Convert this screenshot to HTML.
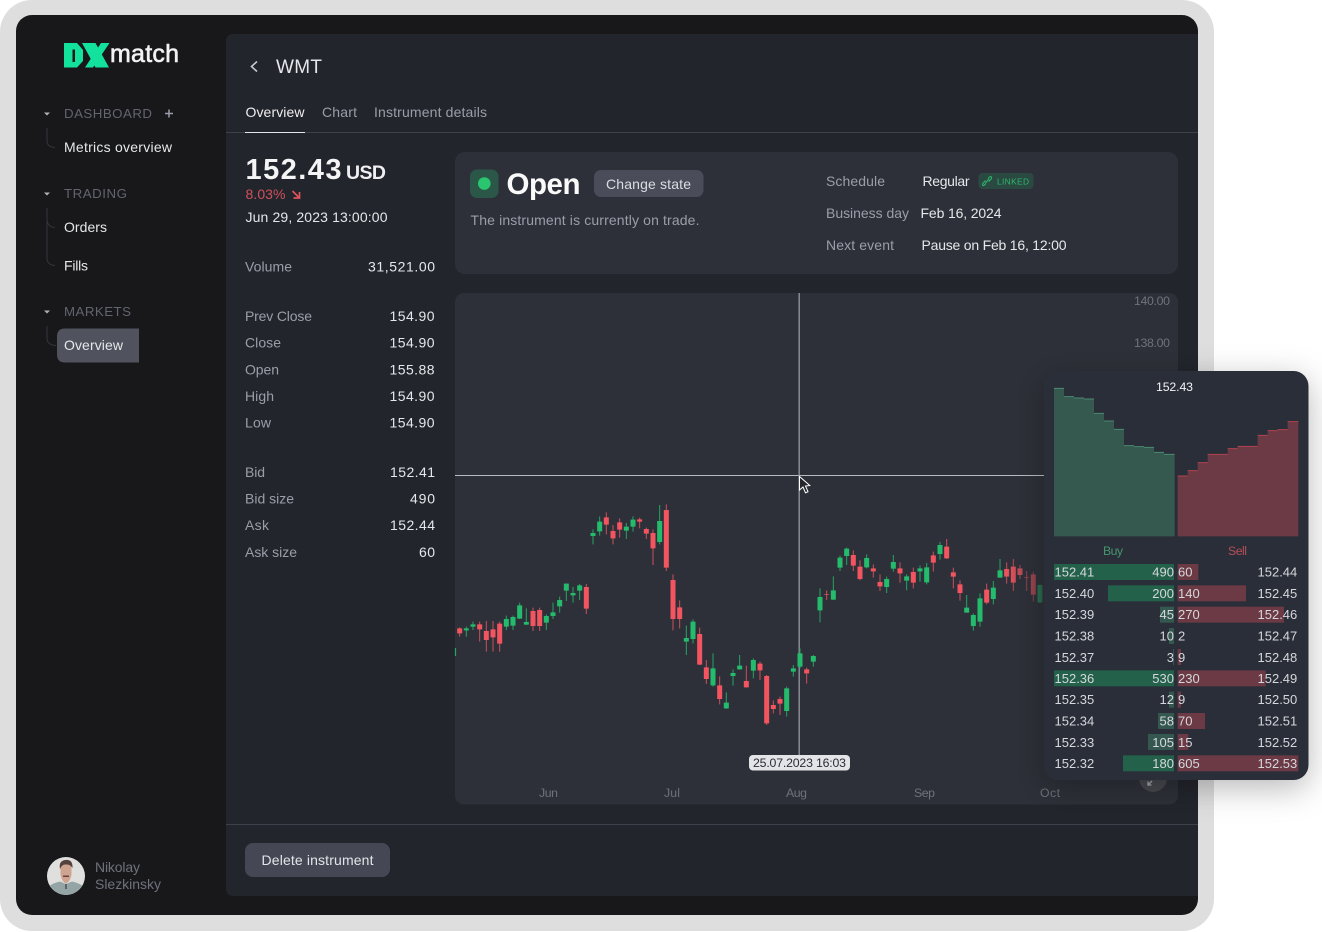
<!DOCTYPE html>
<html lang="en"><head><meta charset="utf-8"><title>DXmatch WMT</title>
<style>
html,body{margin:0;padding:0;background:#fff;width:1322px;height:932px;overflow:hidden}
svg{display:block}
text{font-family:"Liberation Sans",Arial,sans-serif;font-size:14px;white-space:pre}
.w{fill:#e6e7ea}.g{fill:#9b9da9}.d{fill:#62646f;font-size:13.300px}.b{fill:#6f717d}
.s{font-size:12.300px}
.o{font-size:13px;fill:#d6d7dc}
</style></head><body>
<svg width="1322" height="932" viewBox="0 0 1322 932" xmlns="http://www.w3.org/2000/svg">
<defs>
<filter id="sh" x="-30%" y="-20%" width="160%" height="140%"><feDropShadow dx="0" dy="8" stdDeviation="16" flood-color="#000" flood-opacity=".28"/></filter>
<linearGradient id="fade" x1="0" x2="1" y1="0" y2="0"><stop offset="0" stop-color="#2e3039" stop-opacity="0"/><stop offset=".4" stop-color="#2e3039" stop-opacity=".3"/><stop offset="1" stop-color="#2e3039" stop-opacity=".7"/></linearGradient>
<clipPath id="av"><circle cx="66" cy="876" r="19"/></clipPath>
</defs>
<rect width="1322" height="932" fill="#fff"/>
<rect x="0" y="0" width="1214" height="931" rx="32" fill="#dedede"/>
<rect x="16" y="15" width="1182" height="900" rx="16" fill="#18181b"/>

<!-- logo -->
<path fill="#12e29b" d="M64 43H77L83 50V61L77 67.500H64Z"/>
<path fill="#18181b" d="M72.500 49.500H75V62H72.500Z"/>
<path fill="#18181b" d="M79 43H83L101 67.500H97Z"/>
<path fill="#12e29b" d="M82 43H95.500L109 67.500H95.500Z"/>
<path fill="#12e29b" d="M101 43H109.500L93 67.500H85Z"/>
<text x="110" y="62" style="font-size:25px" fill="#f2f2f3" stroke="#f2f2f3" stroke-width=".6" textLength="69">match</text>

<!-- sidebar -->
<path fill="#aeb0b8" d="M44 112.500H50L47 115.500ZM44 192.500H50L47 195.500ZM44 310.500H50L47 313.500Z"/>
<path fill="none" stroke="#33353c" d="M47 128V141Q47 147 55 147.500M47 208V258Q47 265 55 265.500M47 219Q47 227 55 227.500M47 326V338Q47 345 56 345.500"/>
<text class="d" x="64" y="118" textLength="88">DASHBOARD</text>
<path stroke="#9a9ca6" stroke-width="1.500" d="M165 113.500H173M169 109.500V117.500"/>
<text class="w" x="64" y="152" textLength="108">Metrics overview</text>
<text class="d" x="64" y="198" textLength="63">TRADING</text>
<text class="w" x="64" y="232" textLength="43">Orders</text>
<text class="w" x="64" y="270.500" textLength="24">Fills</text>
<text class="d" x="64" y="316" textLength="67">MARKETS</text>
<path fill="#50525e" d="M65 328.500H139V362.500H65Q57 362.500 57 354.500V336.500Q57 328.500 65 328.500Z"/>
<text class="w" x="64" y="350" textLength="59">Overview</text>

<!-- avatar -->
<g clip-path="url(#av)">
<rect x="47" y="857" width="38" height="38" fill="#dfdfdd"/>
<path fill="#95a5a5" d="M47 895V888Q52 883 60 881.500L66 884L72 881.500Q80 883 85 888V895Z"/>
<path fill="#cfa491" d="M60.500 866Q66 862 71.500 866L71.500 875Q70 882 66 883.500Q62 882 60.500 875Z"/>
<path fill="#55423d" d="M60 869Q58.500 861 65 860Q73 859 72.500 868Q70 864 66 864.500Q62 864 60 869Z"/>
<path fill="#6a423a" d="M63 875.500H69V877H63Z"/>
<path fill="#4a5659" d="M65.200 884H66.800V889H65.200Z"/>
</g>
<text class="b" x="95" y="872" textLength="45">Nikolay</text>
<text class="b" x="95" y="889" textLength="66">Slezkinsky</text>

<!-- main panel -->
<path fill="#23252d" d="M234 34H1198V896H234Q226 896 226 888V42Q226 34 234 34Z"/>
<path fill="none" stroke="#c9cad0" stroke-width="1.600" d="M257 61.500L251.500 66.500L257 71.500"/>
<text x="276" y="73" style="font-size:19px" class="w" textLength="46">WMT</text>
<text x="245.500" y="117" fill="#eeeef0" textLength="59">Overview</text>
<text class="g" x="322" y="117" textLength="35">Chart</text>
<text class="g" x="374" y="117" textLength="113">Instrument details</text>
<path stroke="#3e404b" d="M226 132.500H1198"/>
<path stroke="#e6e7ea" d="M245 132.500H305"/>

<text x="245.500" y="179" style="font-size:29px;font-weight:700" fill="#f5f5f6" textLength="96">152.43</text>
<text x="346" y="179" style="font-size:19.500px;font-weight:700" fill="#f0f0f2" textLength="40">USD</text>
<text x="245.500" y="199" fill="#d1505a" textLength="40">8.03%</text>
<path fill="none" stroke="#e0535c" stroke-width="1.700" d="M292.500 191L299 197.500M299.500 192V198H293.500"/>
<text class="w" x="245.500" y="222" textLength="142">Jun 29, 2023 13:00:00</text>

<text class="g" x="245" y="271.500" textLength="47">Volume</text><text class="w" x="368" y="271.500" textLength="67">31,521.00</text>
<text class="g" x="245" y="321" textLength="67">Prev Close</text><text class="w" x="389.500" y="321" textLength="45">154.90</text>
<text class="g" x="245" y="347.500" textLength="36">Close</text><text class="w" x="389.500" y="347.500" textLength="45">154.90</text>
<text class="g" x="245" y="374.500" textLength="34">Open</text><text class="w" x="389.500" y="374.500" textLength="45">155.88</text>
<text class="g" x="245" y="401" textLength="29">High</text><text class="w" x="389.500" y="401" textLength="45">154.90</text>
<text class="g" x="245" y="427.500" textLength="26">Low</text><text class="w" x="389.500" y="427.500" textLength="45">154.90</text>
<text class="g" x="245" y="477" textLength="20">Bid</text><text class="w" x="390" y="477" textLength="45">152.41</text>
<text class="g" x="245" y="503.500" textLength="49">Bid size</text><text class="w" x="410" y="503.500" textLength="25">490</text>
<text class="g" x="245" y="530" textLength="24">Ask</text><text class="w" x="390" y="530" textLength="45">152.44</text>
<text class="g" x="245" y="557" textLength="52">Ask size</text><text class="w" x="419" y="557" textLength="16">60</text>

<!-- state card -->
<rect x="455" y="152" width="723" height="122" rx="10" fill="#2e3039"/>
<rect x="470" y="169.500" width="28.500" height="28.500" rx="7" fill="#2a5747"/>
<circle cx="484.300" cy="183.500" r="6.300" fill="#2cc56f"/>
<text x="506.500" y="194" style="font-size:29.500px;font-weight:700" fill="#fafafb" textLength="74">Open</text>
<rect x="594" y="170" width="109.500" height="27" rx="7" fill="#4a4c59"/>
<text x="606" y="189" fill="#dcdde2" textLength="85">Change state</text>
<text class="g" x="470.500" y="225" textLength="229">The instrument is currently on trade.</text>
<text class="g" x="826" y="186" textLength="59">Schedule</text>
<text class="w" x="922.500" y="186" textLength="47">Regular</text>
<rect x="978.500" y="173" width="55" height="16" rx="4" fill="#2a4a41"/>
<path fill="none" stroke="#2fb56d" stroke-width="1.100" d="M986 183.500L983.800 185.500Q982 185.800 982.800 183.500L985.500 180.500M988 178.500L990 176.700Q992 176.300 991.500 178.500L988.800 181.500M985.500 183L989 179"/>
<text x="997" y="184.500" style="font-size:8.400px" fill="#2fb56d" textLength="32">LINKED</text>
<text class="g" x="826" y="218" textLength="83">Business day</text>
<text class="w" x="920.500" y="218" textLength="81">Feb 16, 2024</text>
<text class="g" x="826" y="250" textLength="68">Next event</text>
<text class="w" x="921.500" y="250" textLength="145">Pause on Feb 16, 12:00</text>

<!-- chart -->
<rect x="455" y="293" width="723" height="511.500" rx="9" fill="#2e3039"/>
<text class="b s" x="1134" y="305" textLength="36">140.00</text>
<text class="b s" x="1134" y="347" textLength="36">138.00</text>

<path stroke="#babbc2" d="M455 475.500H1060"/>
<path stroke="#8f919b" stroke-width="1.400" d="M799.200 293V760"/>

<path stroke="#25a765" stroke-width="1.200" d="M455.500 648V656"/>
<g transform="translate(455 495) scale(.33333)" fill="none">
<path stroke="#c9505b" stroke-width="3" d="M14 397V425M74 380V440M94 378V470M114 378V470M134 380V470M234 338V408M254 338V408M394 267V357M454 52V118M474 90V148M494 70V128M554 68V100M574 98V132M594 103V210M634 28V228M654 238V406M674 316V400M734 398V510M754 495V567M794 544V628M874 512V578"/>
<path stroke="#f2555f" stroke-width="15" d="M14 400V415M74 388V403M94 408V435M114 403V427M134 386V446M234 348V393M254 345V393M394 276V341M454 67V89M474 108V130M494 82V104M554 73V80M574 102V116M594 114V160M634 45V218M654 255V372M674 337V372M734 417V509M754 517V552M794 571V612M874 558V577"/>
<path stroke="#24a462" stroke-width="3" d="M34 395V425M54 380V405M154 362V405M174 362V405M194 323V372M214 340V390M274 358V405M294 323V372M314 305V353M334 265V318M354 276V323M374 267V315M414 103V148M434 64V122M514 84V132M534 64V110M614 30V148M694 392V480M714 373V445M774 475V575M814 592V642M834 523V572M854 480V524"/>
<path stroke="#25bb6c" stroke-width="15" d="M34 400V406M54 388V395M154 372V395M174 366V392M194 331V371M214 381V389M274 363V383M294 352V363M314 315V334M334 266V287M354 294V301M374 271V287M414 114V123M434 80V109M514 95V107M534 74V95M614 78V141M694 429V440M714 380V432M774 520V571M814 623V640M834 534V543M854 512V523"/>
</g>
<g transform="translate(750 465) scale(.33333)" fill="none">
<path stroke="#c9505b" stroke-width="3" d="M30 590V645M50 630V780M70 706V745M90 695V750M170 608V656M230 376V405M310 256V318M330 286V346M370 298V338M390 328V378M450 292V353M490 308V370M550 260V320M590 222V282M610 308V370M630 346V407M710 356V418M770 292V356M790 282V378M810 300V342M830 318V378M850 320V410"/>
<path stroke="#f2555f" stroke-width="15" d="M30 596V616M50 633V775M70 720V732M90 702V716M170 613V625M230 388V390M310 270V302M330 305V342M370 310V319M390 351V364M450 310V325M490 321V353M550 271V293M590 245V280M610 322V335M630 358V384M710 374V413M770 312V335M790 305V353M810 310V330M830 336V338M850 328V389"/>
<path stroke="#24a462" stroke-width="3" d="M10 580V640M110 665V755M130 600V635M150 550V610M190 570V605M210 370V472M250 334V405M270 272V318M290 248V300M350 268V310M410 335V384M430 270V320M470 328V376M510 302V350M530 294V358M570 231V284M650 390V443M670 445V497M690 385V485M730 348V418M750 282V338M870 358V415"/>
<path stroke="#25bb6c" stroke-width="15" d="M10 585V617M110 670V738M130 610V620M150 565V605M190 573V590M210 396V436M250 376V404M270 278V308M290 251V273M350 279V307M410 342V366M430 291V311M470 334V347M510 310V319M530 307V352M570 240V267M650 428V443M670 450V483M690 400V470M730 368V402M750 316V338M870 360V412"/>
</g>
<rect x="1004" y="530" width="44" height="90" fill="url(#fade)"/>

<path fill="#25262d" stroke="#fff" stroke-width="1" d="M799.500 476.500V490L803 487L805.500 492.800L808 491.700L805.500 486L809.800 485.500Z"/>

<rect x="749" y="755" width="101" height="15.500" rx="4" fill="#e3e4e8"/>
<text x="753" y="766.800" style="font-size:12.300px" fill="#2a2b33" textLength="93">25.07.2023 16:03</text>
<text class="b s" x="539" y="797" textLength="19">Jun</text>
<text class="b s" x="664" y="797" textLength="16">Jul</text>
<text class="b s" x="786" y="797" textLength="21">Aug</text>
<text class="b s" x="914" y="797" textLength="21">Sep</text>
<text class="b s" x="1040" y="797" textLength="20">Oct</text>
<circle cx="1153" cy="778" r="14" fill="#46484f"/>
<path fill="none" stroke="#a6a8b0" stroke-width="1.300" d="M1152 781L1148 785M1148 781.500V785H1151.500M1154 779L1158 775"/>

<!-- footer -->
<path stroke="#3e404b" d="M226 824.500H1198"/>
<rect x="245" y="843" width="145" height="34" rx="8" fill="#454754"/>
<text x="261.500" y="865" fill="#e4e5e8" textLength="112">Delete instrument</text>

<!-- order book popup -->
<rect x="1044" y="371" width="264.500" height="409" rx="15" fill="#2c2f39" filter="url(#sh)"/>
<text x="1156" y="391" style="font-size:12.300px" fill="#f2f2f4" textLength="37">152.43</text>
<g transform="translate(1040 365) scale(.33333)">
<path fill="#35584f" d="M42 70H72V95H102V99H132V102H162V145H192V168H222V193H252V242H282V245H312V247H342V262H372V268H404V514H42Z"/>
<path fill="none" stroke="#4a8a70" stroke-width="3" d="M42 70H72M72 95H102M102 99H132M132 102H162M162 145H192M192 168H222M222 193H252M252 242H282M282 245H312M312 247H342M342 262H372M372 268H404"/>
<path fill="#6b3a44" d="M413 333H443V317H473V293H503V268H563V251H593V244H653V211H683V197H713V194H743V170H775V514H413Z"/>
<path fill="none" stroke="#b0444f" stroke-width="3" d="M413 333H443M443 317H473M473 293H503M503 268H563M563 251H593M593 244H653M653 211H683M683 197H713M713 194H743M743 170H775"/>
</g>
<text x="1103" y="555" style="font-size:12.300px" fill="#47946f" textLength="20">Buy</text>
<text x="1228" y="555" style="font-size:12.300px" fill="#b44f58" textLength="19">Sell</text>
<g transform="translate(1040 560) scale(.33333)">
<g fill="#23614a">
<rect x="42" y="12" width="360" height="48"/><rect x="204" y="76" width="198" height="48"/><rect x="42" y="331" width="360" height="48"/><rect x="249" y="586" width="153" height="48"/>
</g>
<g fill="#345850">
<rect x="360" y="140" width="42" height="48"/><rect x="387" y="204" width="15" height="48"/><rect x="399" y="267" width="3" height="48"/><rect x="387" y="395" width="15" height="48"/><rect x="354" y="459" width="48" height="48"/><rect x="324" y="522" width="78" height="48"/>
</g>
<g fill="#6b3a44">
<rect x="413" y="12" width="62" height="48"/><rect x="413" y="76" width="205" height="48"/><rect x="413" y="140" width="319" height="48"/><rect x="413" y="267" width="10" height="48"/><rect x="413" y="331" width="264" height="48"/><rect x="413" y="395" width="10" height="48"/><rect x="413" y="459" width="82" height="48"/><rect x="413" y="522" width="32" height="48"/><rect x="413" y="586" width="362" height="48"/>
</g>
</g>
<g class="o">
<text class="o" x="1054.500" y="576.500">152.41</text><text class="o" x="1174" y="576.500" text-anchor="end">490</text><text class="o" x="1178" y="576.500">60</text><text class="o" x="1257.500" y="576.500">152.44</text>
<text class="o" x="1054.500" y="597.800">152.40</text><text class="o" x="1174" y="597.800" text-anchor="end">200</text><text class="o" x="1178" y="597.800">140</text><text class="o" x="1257.500" y="597.800">152.45</text>
<text class="o" x="1054.500" y="619.200">152.39</text><text class="o" x="1174" y="619.200" text-anchor="end">45</text><text class="o" x="1178" y="619.200">270</text><text class="o" x="1257.500" y="619.200">152.46</text>
<text class="o" x="1054.500" y="640.500">152.38</text><text class="o" x="1174" y="640.500" text-anchor="end">10</text><text class="o" x="1178" y="640.500">2</text><text class="o" x="1257.500" y="640.500">152.47</text>
<text class="o" x="1054.500" y="661.800">152.37</text><text class="o" x="1174" y="661.800" text-anchor="end">3</text><text class="o" x="1178" y="661.800">9</text><text class="o" x="1257.500" y="661.800">152.48</text>
<text class="o" x="1054.500" y="683">152.36</text><text class="o" x="1174" y="683" text-anchor="end">530</text><text class="o" x="1178" y="683">230</text><text class="o" x="1257.500" y="683">152.49</text>
<text class="o" x="1054.500" y="704.200">152.35</text><text class="o" x="1174" y="704.200" text-anchor="end">12</text><text class="o" x="1178" y="704.200">9</text><text class="o" x="1257.500" y="704.200">152.50</text>
<text class="o" x="1054.500" y="725.500">152.34</text><text class="o" x="1174" y="725.500" text-anchor="end">58</text><text class="o" x="1178" y="725.500">70</text><text class="o" x="1257.500" y="725.500">152.51</text>
<text class="o" x="1054.500" y="746.800">152.33</text><text class="o" x="1174" y="746.800" text-anchor="end">105</text><text class="o" x="1178" y="746.800">15</text><text class="o" x="1257.500" y="746.800">152.52</text>
<text class="o" x="1054.500" y="768">152.32</text><text class="o" x="1174" y="768" text-anchor="end">180</text><text class="o" x="1178" y="768">605</text><text class="o" x="1257.500" y="768">152.53</text>
</g>
</svg>
</body></html>
